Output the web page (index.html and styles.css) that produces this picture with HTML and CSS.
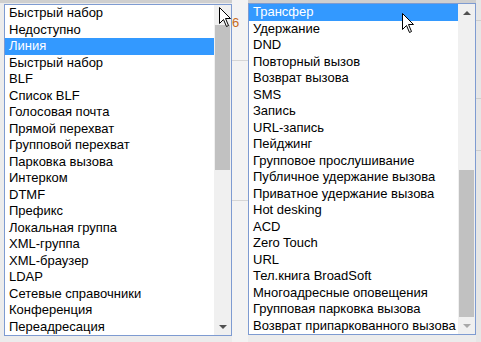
FILE: index.html
```html
<!DOCTYPE html>
<html lang="ru">
     <head>
          <meta charset="UTF-8">
          <title>Выбор функции клавиши</title>
          <link rel="stylesheet" href="styles.css">
     </head>
     <body>
          <div class="screen">
               <div class="dropdown dropdown-left">
                    <ul class="options">
                         <li>Быстрый набор</li>
                         <li>Недоступно</li>
                         <li class="selected">Линия</li>
                         <li>Быстрый набор</li>
                         <li>BLF</li>
                         <li>Список BLF</li>
                         <li>Голосовая почта</li>
                         <li>Прямой перехват</li>
                         <li>Групповой перехват</li>
                         <li>Парковка вызова</li>
                         <li>Интерком</li>
                         <li>DTMF</li>
                         <li>Префикс</li>
                         <li>Локальная группа</li>
                         <li>XML-группа</li>
                         <li>XML-браузер</li>
                         <li>LDAP</li>
                         <li>Сетевые справочники</li>
                         <li>Конференция</li>
                         <li>Переадресация</li>
                    </ul>
                    <div class="scrollbar">
                         <div class="arrow arrow-up"></div>
                         <div class="track"><div class="thumb thumb-left"></div></div>
                         <div class="arrow arrow-down"></div>
                    </div>
                    <svg class="cursor cursor-left" width="13" height="21" viewBox="0 0 13 21">
                         <path d="M0.5 0.5 L0.5 16.5 L4.5 12.5 L7.5 19.5 L9.5 18.5 L6.5 11.5 L11.5 11.5 Z" fill="#fff" stroke="#000" stroke-width="1"/>
                    </svg>
               </div>
               <div class="gap">
                    <span class="peek peek-6">6</span>
               </div>
               <div class="dropdown dropdown-right">
                    <ul class="options">
                         <li class="selected">Трансфер</li>
                         <li>Удержание</li>
                         <li>DND</li>
                         <li>Повторный вызов</li>
                         <li>Возврат вызова</li>
                         <li>SMS</li>
                         <li>Запись</li>
                         <li>URL-запись</li>
                         <li>Пейджинг</li>
                         <li>Групповое прослушивание</li>
                         <li>Публичное удержание вызова</li>
                         <li>Приватное удержание вызова</li>
                         <li>Hot desking</li>
                         <li>ACD</li>
                         <li>Zero Touch</li>
                         <li>URL</li>
                         <li>Тел.книга BroadSoft</li>
                         <li>Многоадресные оповещения</li>
                         <li>Групповая парковка вызова</li>
                         <li>Возврат припаркованного вызова</li>
                    </ul>
                    <div class="scrollbar">
                         <div class="arrow arrow-up"></div>
                         <div class="track"><div class="thumb thumb-right"></div></div>
                         <div class="arrow arrow-down disabled"></div>
                    </div>
                    <svg class="cursor cursor-right" width="13" height="21" viewBox="0 0 13 21">
                         <path d="M0.5 0.5 L0.5 16.5 L4.5 12.5 L7.5 19.5 L9.5 18.5 L6.5 11.5 L11.5 11.5 Z" fill="#fff" stroke="#000" stroke-width="1"/>
                    </svg>
               </div>
               <div class="edge"></div>
          </div>
     </body>
</html>
```

FILE: styles.css
```css
body {
     margin: 0;
     padding: 0;
     background-color: #e9e9e9;
     font-family: "Liberation Sans", Arial, sans-serif;
}
.screen {
     display: flex;
     align-items: flex-start;
     width: 481px;
     height: 342px;
     padding-left: 4px;
     box-sizing: border-box;
     overflow: hidden;
     background: linear-gradient(#cfcfcf, #cfcfcf) 0 0 / 100% 3px no-repeat, #ececec;
}
.dropdown {
     position: relative;
     display: flex;
     width: 228px;
     border: 1px solid #7e9bd1;
     background-color: #fff;
     box-sizing: border-box;
}
.dropdown-left {
     margin-top: 4px;
}
.dropdown-right {
     margin-top: 3px;
}
.options {
     list-style: none;
     margin: 0;
     padding: 0;
     flex: 1;
}
.options li {
     height: 16.5px;
     line-height: 16.5px;
     padding-left: 4px;
     font-size: 13px;
     color: #000;
     white-space: nowrap;
}
.options li.selected {
     background-color: #3399ff;
     color: #fff;
}
.scrollbar {
     width: 17px;
     display: flex;
     flex-direction: column;
     background-color: #f0f0f0;
}
.arrow {
     height: 17px;
     display: flex;
     align-items: center;
     justify-content: center;
}
.arrow::after {
     content: "";
     border-left: 4px solid transparent;
     border-right: 4px solid transparent;
}
.arrow-up::after {
     border-bottom: 4px solid #505050;
}
.arrow-down::after {
     border-top: 4px solid #505050;
}
.arrow-down.disabled::after {
     border-top-color: #a8a8a8;
}
.track {
     flex: 1;
     position: relative;
}
.thumb {
     position: absolute;
     left: 1px;
     right: 1px;
     background-color: #c1c1c1;
}
.thumb-left {
     top: 3px;
     height: 145px;
}
.thumb-right {
     top: 149px;
     bottom: 0;
}
.cursor {
     position: absolute;
}
.cursor-left {
     left: 214px;
     top: 2px;
}
.cursor-right {
     left: 153px;
     top: 9px;
}
.gap {
     width: 16px;
     height: 342px;
     position: relative;
     background: linear-gradient(#d6d6d6, #d6d6d6) 0 60px / 100% 1px no-repeat,
          linear-gradient(#d6d6d6, #d6d6d6) 0 200px / 100% 1px no-repeat,
          #f3f3f3;
}
.peek {
     position: absolute;
     font-size: 13px;
     color: #c86a1a;
}
.peek-6 {
     left: 0;
     top: 15px;
}
.edge {
     flex: 1;
     height: 342px;
     background: linear-gradient(#cdcdcd, #cdcdcd) 0 20px / 100% 1px no-repeat,
          linear-gradient(#cdcdcd, #cdcdcd) 0 98px / 100% 1px no-repeat,
          linear-gradient(#cdcdcd, #cdcdcd) 0 150px / 100% 1px no-repeat,
          #e6e6e6;
}
```
